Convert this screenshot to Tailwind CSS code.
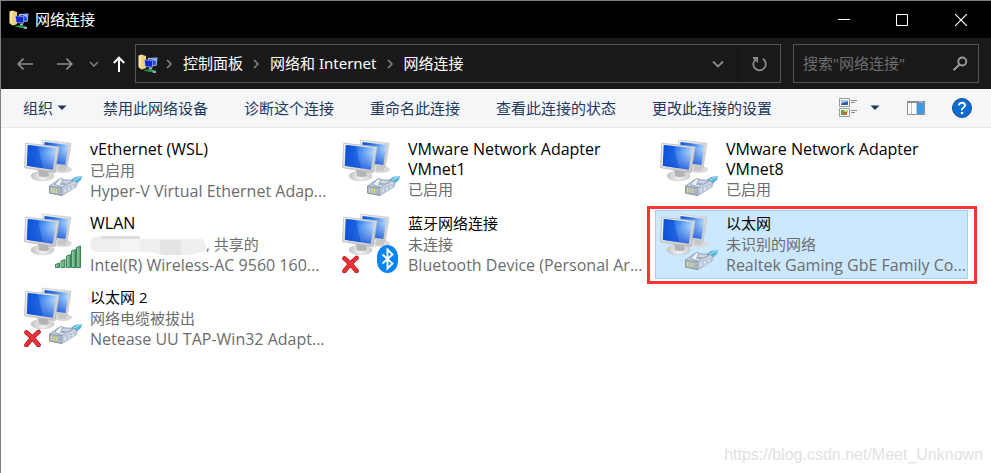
<!DOCTYPE html>
<html lang="zh-CN">

<head>
  <meta charset="UTF-8" />
  <title>网络连接</title>
  <meta name="viewport" content="width=device-width, initial-scale=1.0" />
  <script src="https://cdn.jsdelivr.net/npm/@tailwindcss/browser@4"></script>
</head>

<body class="min-h-screen flex flex-col bg-white border-t border-l border-[#7d7d7d] text-[15px] font-['Noto_Sans','Noto_Sans_CJK_SC',sans-serif]">

  <!-- Shared icons -->
  <svg class="absolute size-0" aria-hidden="true">
    <defs>
      <linearGradient id="screen" x1="0" y1="0" x2="1" y2="0.4">
        <stop offset="0" stop-color="#0a4fd8" />
        <stop offset="0.4" stop-color="#2a78ee" />
        <stop offset="1" stop-color="#c2e2fd" />
      </linearGradient>
      <linearGradient id="screenLow" x1="0" y1="0" x2="0" y2="1">
        <stop offset="0.3" stop-color="#0a49d6" stop-opacity="0" />
        <stop offset="1" stop-color="#0a49d6" stop-opacity="0.8" />
      </linearGradient>
      <linearGradient id="metal" x1="0" y1="0" x2="1" y2="1">
        <stop offset="0" stop-color="#f4f4f4" />
        <stop offset="1" stop-color="#c2c2c2" />
      </linearGradient>
      <linearGradient id="stand" x1="0" y1="0" x2="1" y2="0">
        <stop offset="0" stop-color="#c4c4c4" />
        <stop offset="0.5" stop-color="#f0f0f0" />
        <stop offset="1" stop-color="#cccccc" />
      </linearGradient>
      <linearGradient id="bar" x1="0" y1="0" x2="1" y2="0">
        <stop offset="0" stop-color="#9ed3ae" />
        <stop offset="1" stop-color="#4d9c69" />
      </linearGradient>
      <linearGradient id="folder" x1="0" y1="0" x2="1" y2="0">
        <stop offset="0" stop-color="#fff0b0" />
        <stop offset="1" stop-color="#dfb956" />
      </linearGradient>
    </defs>

    <symbol id="monitors" viewBox="0 0 60 60">
      <ellipse cx="39" cy="30.500" rx="9" ry="3.500" fill="#dadada" />
      <path d="M34 25l8 2v5h-8z" fill="#c8c8c8" />
      <path d="M18.300 1L47 4.300 43.200 28.500 20 25z" fill="url(#metal)" stroke="#c6c6c6" stroke-width=".7" />
      <path d="M20.500 3L44.600 6 41.300 26 20 23z" fill="url(#screen)" />
      <path d="M20.500 3L44.600 6 41.300 26 20 23z" fill="url(#screenLow)" />
      <ellipse cx="18.500" cy="37" rx="11.500" ry="4.800" fill="url(#stand)" stroke="#bdbdbd" stroke-width=".5" />
      <path d="M14 30l10 2 1 5q-5 2-10 0z" fill="#b4b4b4" />
      <path d="M1.700 4.300L35.300 7.700 31 33.700 .500 28.700z" fill="url(#metal)" stroke="#b2b2b2" stroke-width=".7" />
      <path d="M3.800 6L32.600 9 28.700 30.700 2.900 26.700z" fill="url(#screen)" />
      <path d="M3.800 6L32.600 9 28.700 30.700 2.900 26.700z" fill="url(#screenLow)" />
      <path d="M3.800 6l10 1L19 29.200 2.900 26.700z" fill="#0c4cd2" opacity=".5" />
    </symbol>

    <symbol id="plug" viewBox="0 0 60 60">
      <path d="M46 41.500L51 38l7-1.200-1 4.200-6 5z" fill="#58b4dc" />
      <path d="M50 41l7-3.500" stroke="#bfe9f8" stroke-width="1" />
      <path d="M25.500 47L35 40.500 50 41.500 53 44 52.500 47.500 38 56.500 25.500 54z" fill="#ccd6e3" stroke="#8b9bb0" stroke-width=".9" stroke-linejoin="round" />
      <path d="M25.500 47l12.500 1.800V56.500L25.500 54z" fill="#aab5c6" stroke="#7f8ea3" stroke-width=".7" />
      <path d="M38 48.800L53 44v3.500L38 56.500z" fill="#b9c5d8" />
      <path d="M41 49.500v4M45 48v4M49 46.500v3" stroke="#e3eaf3" stroke-width="1.300" />
      <path d="M27.500 49v4.500M30 49.500v4.500M32.500 50v4.200" stroke="#dcd980" stroke-width="1.300" />
      <path d="M30.500 45.500l5.500-6 3 .5-2.500 5.500 4.500.8-2 2z" fill="#eef3f8" stroke="#7a8ca2" stroke-width=".7" />
      <path d="M38 44.500l5 .8 6-3" fill="none" stroke="#7f91a8" stroke-width=".9" />
    </symbol>

    <symbol id="signal" viewBox="0 0 60 60">
      <g fill="url(#bar)" stroke="#3b8457" stroke-width="1">
        <path d="M31.500 54.500v-3l4-1.500v4.500z" />
        <path d="M37 54.500v-6.500l4-1.500v8z" />
        <path d="M42.500 54.500v-11.500l4-1.500v13z" />
        <path d="M47.500 54.500v-16.500l4-1.500v18z" />
        <path d="M52.500 54.500v-20l4-1.500v21.500z" />
      </g>
    </symbol>

    <symbol id="bluetooth" viewBox="0 0 60 60">
      <rect x="35" y="32" width="21" height="28" rx="10.500" ry="12" fill="#0a84f5" />
      <path d="M40.500 41.500l10 9-5 5v-19l5 5-10 9" fill="none" stroke="#fff" stroke-width="1.900" />
    </symbol>

    <symbol id="cross" viewBox="0 0 60 60">
      <path d="M2.500 45.500Q8 50 14.500 58M14.500 45Q8 50 2.500 58" fill="none" stroke="#b5121b" stroke-width="4.600" stroke-linecap="round" />
      <path d="M2.500 45.500Q8 50 14.500 58M14.500 45Q8 50 2.500 58" fill="none" stroke="#e8353c" stroke-width="3" stroke-linecap="round" />
    </symbol>

    <symbol id="netfolder" viewBox="0 0 20 20">
      <path d="M.500 1.500l3-1L8 2v12l-4.500 1.500-3-2.500z" fill="url(#folder)" />
      <path d="M3.500 3L8 2v12l-4.500 1.500z" fill="#f0d07a" />
      <path d="M10 4l9.500-.5-.8 8-8.200 1z" fill="#b8c8e8" />
      <path d="M11 5l7.600-.5-.7 6.300-6.900.8z" fill="#2b50e0" />
      <path d="M6 5.500l8.500.5.500 7.500-8-.5z" fill="#a9b8e6" />
      <path d="M6.800 6.200l7.200.5.400 6-6.900-.4z" fill="#1426c8" />
      <path d="M13.500 5l5-.5-.3 3z" fill="#9db8ff" />
      <path d="M11 13.500h3v2h-3z" fill="#a9b4c4" />
      <path d="M5 16.500l7-1.500 6 1.500-5.500 1.500z" fill="#25a04a" />
      <path d="M14 17h4v2h-3z" fill="#9aa4ae" />
    </symbol>

    <symbol id="crumb" viewBox="0 0 6 10">
      <path d="M1 1l4 4-4 4" fill="none" stroke="#8a8a8a" stroke-width="1.500" />
    </symbol>
  </svg>

  <!-- Title bar -->
  <header class="h-[37px] bg-black text-white flex items-center pl-2">
    <svg class="size-5 mr-1.5"><use href="#netfolder" /></svg>
    <h1>网络连接</h1>
    <div class="ml-auto flex h-full">
      <button aria-label="最小化" class="w-[58px] grid place-items-center">
        <svg class="w-3 h-3" viewBox="0 0 12 12"><path d="M0 5.500h12" stroke="#fff" /></svg>
      </button>
      <button aria-label="最大化" class="w-[58px] grid place-items-center">
        <svg class="w-3 h-3" viewBox="0 0 12 12"><path d="M.5.500h11v11H.500z" fill="none" stroke="#fff" /></svg>
      </button>
      <button aria-label="关闭" class="w-[60px] grid place-items-center">
        <svg class="w-3 h-3" viewBox="0 0 12 12"><path d="M0 0l12 12M12 0L0 12" stroke="#fff" stroke-width="1.200" /></svg>
      </button>
    </div>
  </header>

  <!-- Navigation -->
  <nav class="h-[51px] bg-[#191919] text-white flex items-center pl-4 pr-3">
    <button aria-label="后退" class="mr-6">
      <svg class="w-4 h-3" viewBox="0 0 16 12"><path d="M16 6H1M6.500.700L1.200 6l5.300 5.300" fill="none" stroke="#8c8c8c" stroke-width="1.700" /></svg>
    </button>
    <button aria-label="前进" class="mr-4">
      <svg class="w-4 h-3" viewBox="0 0 16 12"><path d="M0 6h15M9.500.700L14.800 6l-5.300 5.300" fill="none" stroke="#8c8c8c" stroke-width="1.700" /></svg>
    </button>
    <button aria-label="最近浏览的位置" class="mr-3.5">
      <svg class="w-2.5 h-1.5" viewBox="0 0 10 6"><path d="M1 1l4 4 4-4" fill="none" stroke="#7c7c7c" stroke-width="1.600" /></svg>
    </button>
    <button aria-label="上移" class="mr-2.5">
      <svg class="w-3 h-4" viewBox="0 0 12 16"><path d="M6 16V2M.800 7L6 1.700 11.200 7" fill="none" stroke="#fff" stroke-width="2" /></svg>
    </button>

    <div class="flex-1 h-[39px] border border-[#535353] flex items-center">
      <svg class="size-5 ml-0.5 mr-2"><use href="#netfolder" /></svg>
      <ol class="flex items-center">
        <li class="flex items-center"><svg class="w-1.5 h-2.5 mr-[11px]"><use href="#crumb" /></svg><a href="#">控制面板</a></li>
        <li class="flex items-center"><svg class="w-1.5 h-2.5 ml-2.5 mr-[11px]"><use href="#crumb" /></svg><a href="#">网络和 Internet</a></li>
        <li class="flex items-center"><svg class="w-1.5 h-2.5 ml-2.5 mr-[11px]"><use href="#crumb" /></svg><a href="#">网络连接</a></li>
      </ol>
      <button aria-label="以前的位置" class="ml-auto w-10 h-full grid place-items-center border-r border-[#101010]">
        <svg class="w-3 h-2" viewBox="0 0 12 8"><path d="M1 1.500l5 5 5-5" fill="none" stroke="#8c8c8c" stroke-width="1.800" /></svg>
      </button>
      <button aria-label="刷新" class="w-[42px] h-full grid place-items-center">
        <svg class="w-4 h-4" viewBox="0 0 16 16"><path d="M11.800 2.800A6.200 6.200 0 1 1 5 3M2 2h4.200v4.500" fill="none" stroke="#8c8c8c" stroke-width="1.800" /></svg>
      </button>
    </div>

    <div class="ml-3 w-[186px] h-[39px] border border-[#535353] flex items-center pl-[9px] pr-2.5">
      <input type="search" aria-label="搜索" placeholder='搜索"网络连接"' class="flex-1 min-w-0 bg-transparent outline-none placeholder:text-[#6d6d6d]" />
      <button aria-label="开始搜索">
        <svg class="w-4 h-4" viewBox="0 0 16 16"><circle cx="10.300" cy="5.500" r="4" fill="none" stroke="#9a9a9a" stroke-width="1.900" /><path d="M7.500 8.500L1.500 14.300" stroke="#9a9a9a" stroke-width="2.100" /></svg>
      </button>
    </div>
  </nav>

  <!-- Command bar -->
  <div role="toolbar" class="h-[39px] bg-[#f5f6f8] border-b border-[#e6e7e9] text-[#1e395b] flex items-center gap-9 pl-[22px] pr-[19px] whitespace-nowrap">
    <button class="flex items-center gap-1">组织
      <svg class="w-2.5 h-1.5" viewBox="0 0 10 6"><path d="M.5.500h9L5 5z" fill="#1e395b" /></svg>
    </button>
    <button>禁用此网络设备</button>
    <button>诊断这个连接</button>
    <button>重命名此连接</button>
    <button>查看此连接的状态</button>
    <button>更改此连接的设置</button>
    <div class="ml-auto flex items-center">
      <button aria-label="更改视图" class="flex items-center gap-3 mr-[27px]">
        <svg class="w-[19px] h-5" viewBox="0 0 19 20">
          <path d="M.5.500h10v8H.500zM.5 10.500h10v8H.500z" fill="#fff" stroke="#9a9a9a" />
          <path d="M2 2h7v3H2z" fill="#9cc9f2" />
          <path d="M2 5.500l3-1 4-1V7H2z" fill="#2e5f9e" />
          <path d="M2 12h3v5H2z" fill="#5aa03c" />
          <path d="M5 12h4v3H5z" fill="#b8d879" />
          <path d="M5 14h3v3H5z" fill="#d8602e" />
          <path d="M12 2.500h6M12 4.500h4M12 12.500h6M12 14.500h4" stroke="#8a8a8a" />
        </svg>
        <svg class="w-2.5 h-1.5" viewBox="0 0 10 6"><path d="M.5.500h9L5 5z" fill="#1e395b" /></svg>
      </button>
      <button aria-label="显示预览窗格" class="mr-[27px]">
        <svg class="w-[18px] h-3.5" viewBox="0 0 18 14">
          <path d="M.5.500h17v13H.500z" fill="#fff" stroke="#8d8d8d" />
          <path d="M0 0h18v2H0z" fill="#8d8d8d" />
          <path d="M12.500 1h1M14.500 1h1" stroke="#fff" />
          <path d="M4.500 2v11.500M9.500 2v11.500" stroke="#c9c9c9" />
          <path d="M10 2h7v11h-7z" fill="#3d9be6" />
        </svg>
      </button>
      <button aria-label="获取帮助">
        <svg class="w-5 h-5" viewBox="0 0 20 20">
          <circle cx="10" cy="10" r="9.500" fill="#0a6bd0" stroke="#154f96" />
          <path d="M7 7.400Q7 4.700 10 4.700T13 7.300Q13 8.700 11.300 9.700T10 12.300" fill="none" stroke="#fff" stroke-width="1.900" />
          <circle cx="10" cy="15" r="1.300" fill="#fff" />
        </svg>
      </button>
    </div>
  </div>

  <!-- Connections -->
  <main class="flex-1 flex flex-col">
    <ul class="grid grid-cols-[repeat(auto-fill,313px)] auto-rows-[69px] gap-[5px] pl-[18px] pt-2 leading-[21px] text-[#6d6d6d] whitespace-nowrap font-['Open_Sans','Noto_Sans_CJK_SC',sans-serif]">
      <li>
        <a href="#" class="h-full flex gap-[6px] pl-[5px] pt-[3px]">
          <svg class="size-[60px] shrink-0"><use href="#monitors" /><use href="#plug" /></svg>
          <div>
            <h2 class="text-black text-[16px]/[21px]">vEthernet (WSL)</h2>
            <p>已启用</p>
            <p class="text-[16px]/[21px]">Hyper-V Virtual Ethernet Adap...</p>
          </div>
        </a>
      </li>
      <li>
        <a href="#" class="h-full flex gap-[6px] pl-[5px] pt-[3px]">
          <svg class="size-[60px] shrink-0"><use href="#monitors" /><use href="#plug" /></svg>
          <div>
            <h2 class="text-black text-[16px]/[20px]">VMware Network Adapter<br />VMnet1</h2>
            <p>已启用</p>
          </div>
        </a>
      </li>
      <li>
        <a href="#" class="h-full flex gap-[6px] pl-[5px] pt-[3px]">
          <svg class="size-[60px] shrink-0"><use href="#monitors" /><use href="#plug" /></svg>
          <div>
            <h2 class="text-black text-[16px]/[20px]">VMware Network Adapter<br />VMnet8</h2>
            <p>已启用</p>
          </div>
        </a>
      </li>
      <li>
        <a href="#" class="h-full flex gap-[6px] pl-[5px] pt-[3px]">
          <svg class="size-[60px] shrink-0"><use href="#monitors" /><use href="#signal" /></svg>
          <div>
            <h2 class="text-black text-[16px]/[21px]">WLAN</h2>
            <p class="flex items-center">
              <!-- network name is blanked out -->
              <svg class="w-[116px] h-5" viewBox="0 0 116 20">
                <path d="M3 2Q0 5 0 10T5 17H60L72 20H100L116 16Q118 8 112 4L50 4V1H10z" fill="#efefef" />
                <path d="M11 1h39v3H11z" fill="#dcdcde" />
                <path d="M70 5h21v15H74l-4-2z" fill="#e4e4e4" />
                <path d="M30 4h20v13H30z" fill="#f4f4f4" />
              </svg>, 共享的
            </p>
            <p class="text-[16px]/[21px]">Intel(R) Wireless-AC 9560 160...</p>
          </div>
        </a>
      </li>
      <li>
        <a href="#" class="h-full flex gap-[6px] pl-[5px] pt-[3px]">
          <svg class="size-[60px] shrink-0"><use href="#monitors" /><use href="#bluetooth" /><use href="#cross" /></svg>
          <div>
            <h2 class="text-black">蓝牙网络连接</h2>
            <p>未连接</p>
            <p class="text-[16px]/[21px]">Bluetooth Device (Personal Ar...</p>
          </div>
        </a>
      </li>
      <li class="relative">
        <a href="#" aria-current="true" class="h-full flex gap-[6px] pl-1 pt-0.5 bg-[#cce8ff] border border-[#99d1ff]">
          <svg class="size-[60px] shrink-0"><use href="#monitors" /><use href="#plug" /></svg>
          <div>
            <h2 class="text-black">以太网</h2>
            <p>未识别的网络</p>
            <p class="text-[16px]/[21px]">Realtek Gaming GbE Family Co...</p>
          </div>
        </a>
        <div class="absolute -top-1 -bottom-[5px] -left-2 -right-[9px] border-3 border-[#fb3434] pointer-events-none"></div>
      </li>
      <li>
        <a href="#" class="h-full flex gap-[6px] pl-[5px] pt-[3px]">
          <svg class="size-[60px] shrink-0"><use href="#monitors" /><use href="#plug" /><use href="#cross" /></svg>
          <div>
            <h2 class="text-black">以太网 2</h2>
            <p>网络电缆被拔出</p>
            <p class="text-[16px]/[21px]">Netease UU TAP-Win32 Adapt...</p>
          </div>
        </a>
      </li>
    </ul>
    <p class="mt-auto pr-2 pb-1.5 text-right text-base text-[#e2e2e2] font-['Liberation_Sans',sans-serif]">https://blog.csdn.net/Meet_Unknown</p>
  </main>

</body>

</html>
